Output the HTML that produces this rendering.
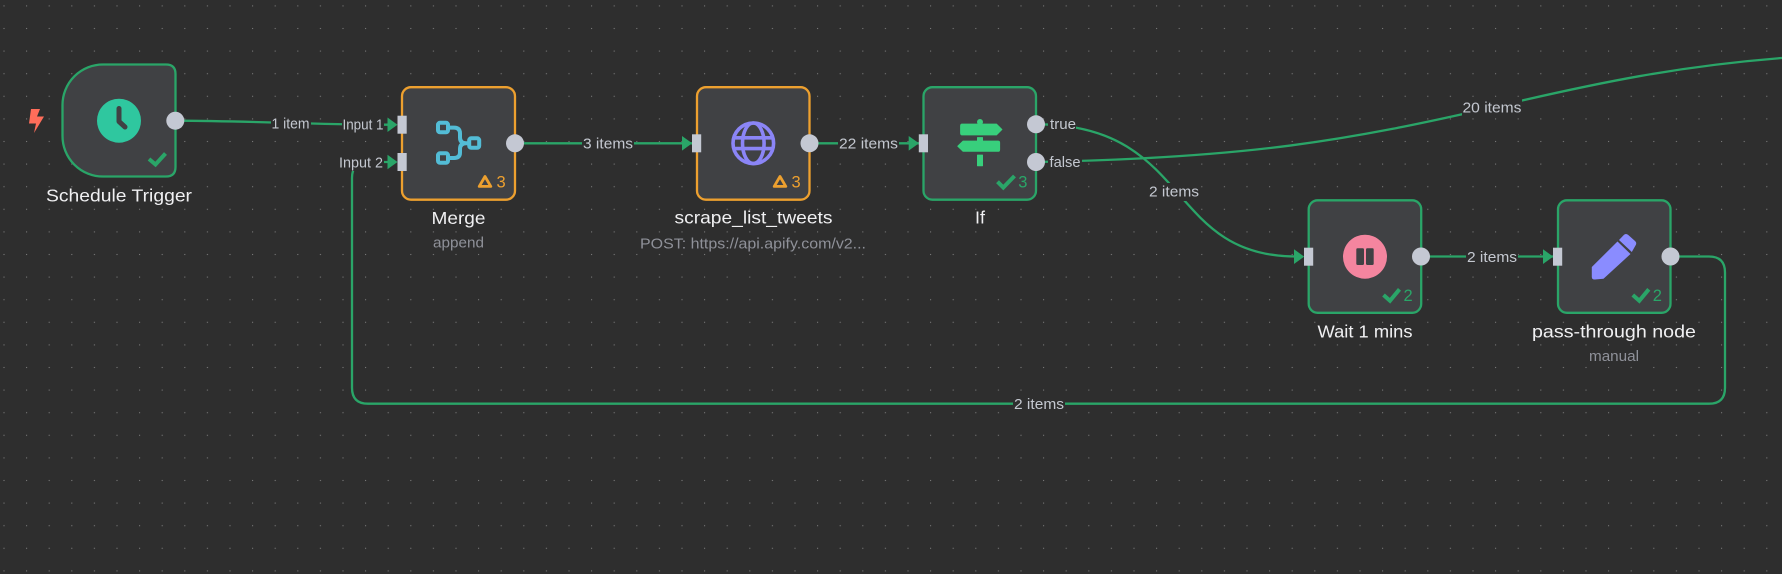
<!DOCTYPE html>
<html>
<head>
<meta charset="utf-8">
<style>
html,body{margin:0;padding:0;background:#2e2e2e;width:1782px;height:574px;overflow:hidden}
svg{display:block}
text{font-family:"Liberation Sans",sans-serif}
.name{fill:#f0f0f2;font-size:17.5px;text-anchor:middle}
.sub{fill:#8f9199;font-size:15px;text-anchor:middle}
.lbl{fill:#c4c8d0;font-size:15px;text-anchor:middle}
.inp{font-size:14.5px}
.edge{fill:none;stroke:#2aa568;stroke-width:2.3}
.node{fill:#404144;stroke-width:2.3}
.g{stroke:#2aa568}.o{stroke:#eda02f}
.port{fill:#c4c8d3}
.arr{fill:#2aa568}
.cnt{font-size:16.5px}
</style>
</head>
<body>
<svg width="1782" height="574" viewBox="0 0 1782 574" xmlns="http://www.w3.org/2000/svg">
<defs>
<pattern id="dots" patternUnits="userSpaceOnUse" width="22.6" height="22.6">
<circle cx="4" cy="5.9" r="0.6" fill="#7c7c7c"/>
</pattern>
</defs>
<rect width="1782" height="574" fill="#2e2e2e"/>
<rect width="1782" height="574" fill="url(#dots)"/>

<!-- edges -->
<path class="edge" d="M175 120.7C260 121 310 124.7 390 124.7"/>
<path class="edge" d="M515 143.3H692"/>
<path class="edge" d="M809.5 143.3H919"/>
<path class="edge" d="M1036 124.300C1192 124 1165 256.500 1296 256.500"/>
<path class="edge" d="M1036 162C1250 158 1350 140 1492 107.500C1600 82 1680 66 1782 58"/>
<path class="edge" d="M1421 256.500H1553"/>
<path class="edge" d="M1670 256.500H1709Q1725 256.500 1725 272.500V387.700Q1725 403.700 1709 403.700H368Q352 403.700 352 387.700V178Q352 162 368 162H392"/>

<!-- edge labels -->
<rect x="271" y="114" width="40" height="19" fill="#2e2e2e"/>
<text class="lbl" x="290.500" y="128.500" textLength="38" lengthAdjust="spacingAndGlyphs">1 item</text>
<rect x="342" y="114" width="42" height="20" fill="#2e2e2e"/>
<text class="lbl inp" x="363" y="129.500" textLength="41" lengthAdjust="spacingAndGlyphs">Input 1</text>
<rect x="339" y="152" width="45" height="19" fill="#2e2e2e"/>
<text class="lbl inp" x="361" y="167.500" textLength="44" lengthAdjust="spacingAndGlyphs">Input 2</text>
<rect x="582" y="133" width="52" height="20" fill="#2e2e2e"/>
<text class="lbl" x="608" y="148.500" textLength="50" lengthAdjust="spacingAndGlyphs">3 items</text>
<rect x="838" y="133" width="61" height="20" fill="#2e2e2e"/>
<text class="lbl" x="868.500" y="148.500" textLength="59" lengthAdjust="spacingAndGlyphs">22 items</text>
<rect x="1048" y="114" width="28" height="20" fill="#2e2e2e"/>
<text class="lbl inp" x="1063" y="129" textLength="26" lengthAdjust="spacingAndGlyphs">true</text>
<rect x="1048" y="152" width="34" height="20" fill="#2e2e2e"/>
<text class="lbl inp" x="1065" y="167" textLength="31" lengthAdjust="spacingAndGlyphs">false</text>
<rect x="1148" y="183" width="52" height="18" fill="#2e2e2e"/>
<text class="lbl" x="1174" y="196.500" textLength="50" lengthAdjust="spacingAndGlyphs">2 items</text>
<rect x="1462" y="97" width="60" height="21" fill="#2e2e2e"/>
<text class="lbl" x="1492" y="112.500" textLength="59" lengthAdjust="spacingAndGlyphs">20 items</text>
<rect x="1466" y="247" width="52" height="20" fill="#2e2e2e"/>
<text class="lbl" x="1492" y="262" textLength="50" lengthAdjust="spacingAndGlyphs">2 items</text>
<rect x="1013" y="394" width="52" height="20" fill="#2e2e2e"/>
<text class="lbl" x="1039" y="409" textLength="50" lengthAdjust="spacingAndGlyphs">2 items</text>

<!-- Trigger node -->
<path class="node g" d="M103 64.500H166Q175.500 64.500 175.500 74V167Q175.500 176.500 166 176.500H103A40.500 40.500 0 0 1 62.500 136V105A40.500 40.500 0 0 1 103 64.500Z"/>
<circle cx="119" cy="120.700" r="22" fill="#2fc79f"/>
<path d="M119 108.500V121.500L125 127" fill="none" stroke="#404144" stroke-width="5" stroke-linecap="round" stroke-linejoin="round"/>
<path d="M31 109H40L37 116.500H44L34 133L36 123.500H29Z" fill="#ff6d5a"/>
<path d="M149 159L155.500 164.500L165.500 153.500" fill="none" stroke="#2aa568" stroke-width="4"/>
<circle class="port" cx="175.300" cy="120.700" r="9"/>
<text class="name" x="119" y="201.500" textLength="146" lengthAdjust="spacingAndGlyphs">Schedule Trigger</text>

<!-- Merge node -->
<rect class="node o" x="402" y="87.200" width="113" height="112.500" rx="9"/>
<g fill="none" stroke="#53bcd6" stroke-width="4" stroke-linejoin="round">
<rect x="438" y="122.800" width="10" height="9.500" rx="2"/>
<rect x="438" y="153.300" width="10" height="9.500" rx="2"/>
<rect x="469.200" y="138.300" width="10" height="9.500" rx="2"/>
<path d="M448 127.600H454Q460 127.600 460 133.500V137.500Q460 143.200 466 143.200H469M448 158H454Q460 158 460 152.500V149Q460 143.200 466 143.200"/>
</g>
<path d="M485 176.500L490.800 186.400H479.200Z" fill="none" stroke="#eda02f" stroke-width="2.800" stroke-linejoin="round"/>
<text x="496.500" y="187.700" fill="#eda02f" class="cnt">3</text>
<path class="arr" d="M387.500 117.500L397.500 124.700L387.500 132Z"/>
<path class="arr" d="M387.500 154.700L397.500 162L387.500 169.300Z"/>
<rect class="port" x="397.500" y="115.700" width="9.200" height="18"/>
<rect class="port" x="397.500" y="153" width="9.200" height="18"/>
<circle class="port" cx="515" cy="143.300" r="9"/>
<text class="name" x="458.500" y="224" textLength="54" lengthAdjust="spacingAndGlyphs">Merge</text>
<text class="sub" x="458.500" y="247.500" textLength="51" lengthAdjust="spacingAndGlyphs">append</text>

<!-- Scrape node -->
<rect class="node o" x="697" y="87.200" width="112.500" height="112.500" rx="9"/>
<g fill="none" stroke="#8b85f7" stroke-width="3.600">
<circle cx="753.300" cy="143.300" r="20.300"/>
<ellipse cx="753.300" cy="143.300" rx="10.800" ry="20.300"/>
<path d="M735 137.800H771.500M735 148.600H771.500"/>
</g>
<path d="M780 176.500L785.800 186.400H774.200Z" fill="none" stroke="#eda02f" stroke-width="2.800" stroke-linejoin="round"/>
<text x="791.500" y="187.700" fill="#eda02f" class="cnt">3</text>
<path class="arr" d="M682 136L692.200 143.300L682 150.600Z"/>
<rect class="port" x="692" y="134.300" width="9.200" height="18"/>
<circle class="port" cx="809.500" cy="143.300" r="9"/>
<text class="name" x="753.500" y="223.700" textLength="158" lengthAdjust="spacingAndGlyphs">scrape_list_tweets</text>
<text class="sub" x="753" y="248.300" textLength="226" lengthAdjust="spacingAndGlyphs">POST: https://api.apify.com/v2...</text>

<!-- If node -->
<rect class="node g" x="923.500" y="87.200" width="112.500" height="112.500" rx="9"/>
<g fill="#38cf7c" stroke="#38cf7c" stroke-width="0.800" stroke-linejoin="round">
<circle cx="980" cy="122" r="2.600"/>
<path d="M962 124H996.500L1002 129.500L996.500 135H962Q960.500 135 960.500 133V126Q960.500 124 962 124Z"/>
<rect x="977.400" y="137.500" width="5.200" height="5"/>
<path d="M963 141H998Q999.700 141 999.700 142.500V149.700Q999.700 151.400 998 151.400H963L957.700 146.200Z"/>
<rect x="977.400" y="155" width="5.200" height="10.800"/>
</g>
<path d="M997.500 181.700L1003.300 187.500L1014.500 176" fill="none" stroke="#2aa568" stroke-width="4"/>
<text x="1018.300" y="187.700" fill="#2aa568" class="cnt">3</text>
<path class="arr" d="M908.700 136L919 143.300L908.700 150.600Z"/>
<rect class="port" x="918.800" y="134.300" width="9.200" height="18"/>
<circle class="port" cx="1036" cy="124.300" r="9"/>
<circle class="port" cx="1036" cy="162" r="9"/>
<text class="name" x="980" y="223.700" textLength="10" lengthAdjust="spacingAndGlyphs">If</text>

<!-- Wait node -->
<rect class="node g" x="1308.700" y="200.300" width="112.500" height="112.500" rx="9"/>
<circle cx="1365" cy="256.700" r="22" fill="#f4859f"/>
<rect x="1356.300" y="248.300" width="7.700" height="16.700" rx="1.200" fill="#404144"/>
<rect x="1366" y="248.300" width="7.700" height="16.700" rx="1.200" fill="#404144"/>
<path d="M1383.500 295L1390 300.800L1399.500 289.300" fill="none" stroke="#2aa568" stroke-width="4"/>
<text x="1403.500" y="301" fill="#2aa568" class="cnt">2</text>
<path class="arr" d="M1294 249.300L1304.200 256.600L1294 264Z"/>
<rect class="port" x="1304" y="247.700" width="9.200" height="18"/>
<circle class="port" cx="1421" cy="256.500" r="9"/>
<text class="name" x="1365" y="337.700" textLength="95" lengthAdjust="spacingAndGlyphs">Wait 1 mins</text>

<!-- Pass-through node -->
<rect class="node g" x="1558" y="200.300" width="112.500" height="112.500" rx="9"/>
<g fill="#8a8cff">
<path d="M1591.800 267L1617.500 241.500L1630.500 254L1603.500 278.800L1595 279.500Q1591.500 279.800 1591.800 276Z"/>
<path d="M1619 240L1623.800 235Q1625.800 233 1628.300 235L1635.300 241.300Q1637 243.300 1635.500 245.500L1631.800 252Z"/>
</g>
<path d="M1632.800 295L1639.300 300.800L1648.800 289.300" fill="none" stroke="#2aa568" stroke-width="4"/>
<text x="1652.800" y="301" fill="#2aa568" class="cnt">2</text>
<path class="arr" d="M1543 249.300L1553.200 256.600L1543 264Z"/>
<rect class="port" x="1553" y="247.700" width="9.200" height="18"/>
<circle class="port" cx="1670.500" cy="256.500" r="9"/>
<text class="name" x="1614" y="337.700" textLength="164" lengthAdjust="spacingAndGlyphs">pass-through node</text>
<text class="sub" x="1614" y="361" textLength="50" lengthAdjust="spacingAndGlyphs">manual</text>
</svg>
</body>
</html>
